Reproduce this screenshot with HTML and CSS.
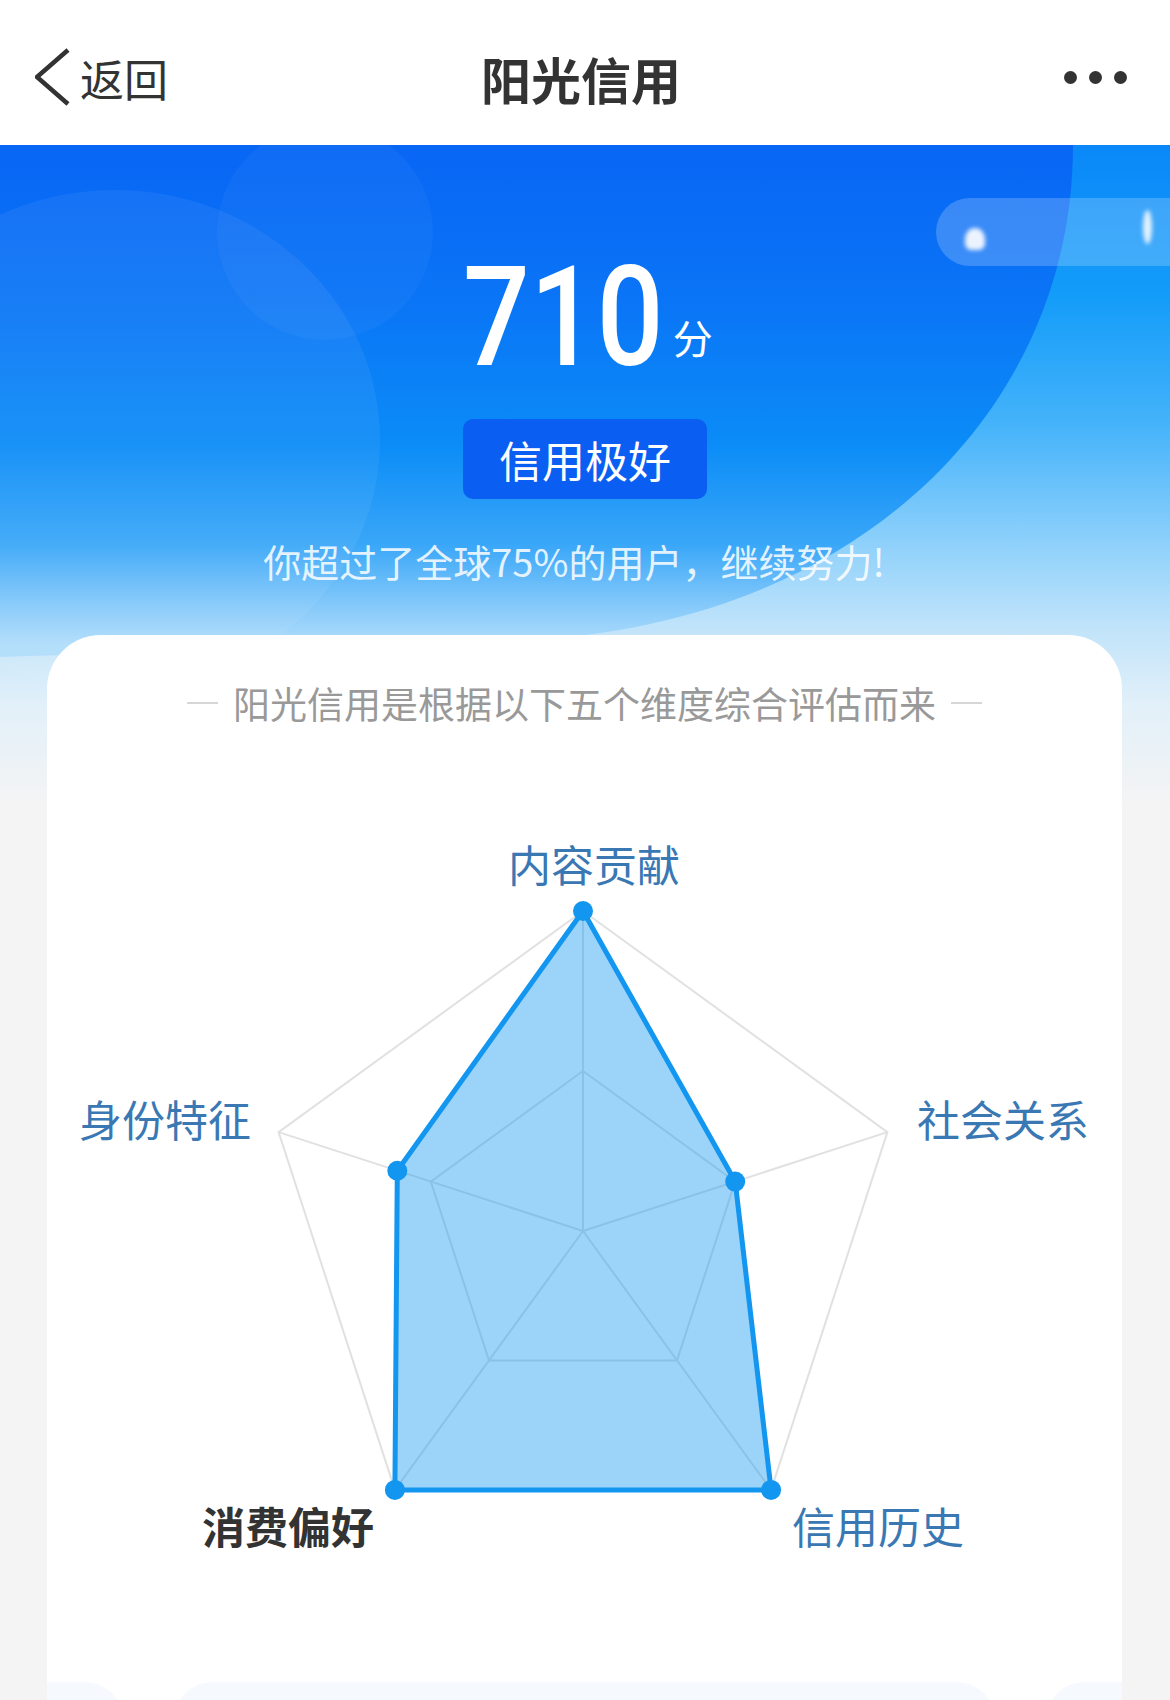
FILE: index.html
```html
<!DOCTYPE html>
<html lang="zh-CN">
<head>
<meta charset="utf-8">
<title>阳光信用</title>
<link rel="stylesheet" href="styles.css">
</head>
<body>
<header class="nav">
  <div class="nav-left">
    <svg class="back-icon" width="36" height="60" viewBox="0 0 36 60"><path d="M33 2 L2 29 L33 56" fill="none" stroke="#333" stroke-width="4.5" stroke-linejoin="miter"/></svg>
    <span class="back-text">返回</span>
  </div>
  <h1 class="nav-title">阳光信用</h1>
  <div class="nav-right"><span class="dot"></span><span class="dot"></span><span class="dot"></span></div>
</header>

<main class="main">
  <svg class="hero-bg" width="1170" height="760" viewBox="0 0 1170 760">
    <defs>
      <linearGradient id="inner" x1="0" y1="0" x2="0" y2="500" gradientUnits="userSpaceOnUse">
        <stop offset="0" stop-color="#0866f5"/>
        <stop offset="0.3" stop-color="#0a74f6"/>
        <stop offset="0.6" stop-color="#0b8cf7"/>
        <stop offset="0.8" stop-color="#3aa7f8"/>
        <stop offset="0.92" stop-color="#84c9fa"/>
        <stop offset="1" stop-color="#b0ddfb"/>
      </linearGradient>
    </defs>
    <path d="M0 0 H1073 C1073 270 850 483 520 495 L0 512 Z" fill="url(#inner)"/>
    <ellipse cx="115" cy="295" rx="265" ry="250" fill="#ffffff" fill-opacity="0.06"/>
    <circle cx="325" cy="87" r="108" fill="#ffffff" fill-opacity="0.035"/>
  </svg>
  <div class="pill"><span class="blob b1"></span><span class="blob b2"></span></div>

  <section class="hero">
    <div class="score"><span class="score-num">710</span><span class="score-unit">分</span></div>
    <div class="badge">信用极好</div>
    <p class="rank">你超过了全球75%的用户，继续努力!</p>
  </section>

  <section class="card">
    <div class="card-title"><span class="dash"></span><span>阳光信用是根据以下五个维度综合评估而来</span><span class="dash"></span></div>
    <div class="radar">
      <svg class="radar-svg" width="1075" height="900" viewBox="0 0 1075 900">
        <g fill="none" stroke="#e1e1e1" stroke-width="2">
          <polygon points="536,181 840.4,402.1 724.1,759.9 347.9,759.9 231.6,402.1"/>
          <polygon points="536,341 688.2,451.6 630,630.4 442,630.4 383.8,451.6"/>
          <line x1="536" y1="501" x2="536" y2="181"/>
          <line x1="536" y1="501" x2="840.4" y2="402.1"/>
          <line x1="536" y1="501" x2="724.1" y2="759.9"/>
          <line x1="536" y1="501" x2="347.9" y2="759.9"/>
          <line x1="536" y1="501" x2="231.6" y2="402.1"/>
        </g>
        <polygon points="536,181 688.2,451.6 724.1,759.9 347.9,759.9 350.3,440.7" fill="rgba(20,150,240,0.42)" stroke="#1296f0" stroke-width="5" stroke-linejoin="round"/>
        <g fill="#1296f0">
          <circle cx="536" cy="181" r="10"/>
          <circle cx="688.2" cy="451.6" r="10"/>
          <circle cx="724.1" cy="759.9" r="10"/>
          <circle cx="347.9" cy="759.9" r="10"/>
          <circle cx="350.3" cy="440.7" r="10"/>
        </g>
      </svg>
      <span class="axis ax-top">内容贡献</span>
      <span class="axis ax-right">社会关系</span>
      <span class="axis ax-left">身份特征</span>
      <span class="axis ax-bl axis-strong">消费偏好</span>
      <span class="axis ax-br">信用历史</span>
    </div>
    <div class="carousel">
      <div class="slide slide-edge-left"></div>
      <div class="slide slide-main"></div>
      <div class="slide slide-edge-right"></div>
    </div>
  </section>
</main>
</body>
</html>
```

FILE: styles.css
```css
html, body {
  margin: 0;
  padding: 0;
  background: #f4f4f4;
}

body {
  width: 1170px;
  font-family: "Noto Sans CJK SC", "Noto Sans", sans-serif;
  color: #333;
  overflow-x: hidden;
}

/* ---------- navigation bar ---------- */
.nav {
  height: 145px;
  box-sizing: border-box;
  padding: 10px 43px 0 35px;
  background: #fff;
  display: grid;
  grid-template-columns: 1fr auto 1fr;
  align-items: center;
}

.nav-left {
  display: flex;
  align-items: center;
  gap: 9px;
}

.back-icon {
  display: block;
}

.back-text {
  font-size: 44px;
  line-height: 50px;
  color: #333;
}

.nav-title {
  margin: 0;
  font-size: 50px;
  line-height: 56px;
  font-weight: 700;
  color: #333;
}

.nav-right {
  display: flex;
  justify-content: flex-end;
  align-items: center;
  gap: 12px;
}

.dot {
  width: 13px;
  height: 13px;
  border-radius: 50%;
  background: #333;
}

/* ---------- main / hero ---------- */
.main {
  position: relative;
  overflow: hidden;
  background: #f4f4f4 linear-gradient(180deg, #0a88f8 0px, #139cf9 150px, #45b3fa 280px, #8fd1fb 400px, #bfe3fa 480px, #e2f0f9 560px, #f4f4f4 660px) no-repeat top left / 100% 760px;
}

.hero-bg {
  position: absolute;
  left: 0;
  top: 0;
  z-index: 0;
}

.pill {
  position: absolute;
  left: 936px;
  top: 53px;
  width: 280px;
  height: 68px;
  border-radius: 34px;
  background: rgba(255, 255, 255, 0.2);
  z-index: 1;
}

.blob {
  position: absolute;
  background: #fff;
  filter: blur(2px);
}

.b1 {
  left: 29px;
  top: 30px;
  width: 20px;
  height: 22px;
  border-radius: 50% 50% 30% 30%;
  opacity: 0.9;
}

.b2 {
  left: 207px;
  top: 12px;
  width: 9px;
  height: 34px;
  border-radius: 50%;
  opacity: 0.85;
}

.hero {
  position: relative;
  z-index: 2;
  padding: 102px 0 49px;
  display: flex;
  flex-direction: column;
  align-items: center;
  color: #fff;
}

.score {
  display: flex;
  align-items: flex-end;
  justify-content: center;
  padding-left: 6px;
}

.score-num {
  display: inline-block;
  font-family: Roboto, "Liberation Sans", sans-serif;
  font-weight: 500;
  font-size: 140px;
  line-height: 140px;
  transform: scaleX(0.84);
  margin: 0 -19px;
}

.score-unit {
  font-size: 40px;
  line-height: 40px;
  margin: 0 0 30px 9px;
}

.badge {
  margin-top: 32px;
  width: 244px;
  height: 80px;
  border-radius: 10px;
  background: #0a5ef2;
  display: flex;
  align-items: center;
  justify-content: center;
  font-size: 43px;
  letter-spacing: 0;
}

.rank {
  margin: 37px 0 0;
  padding-right: 22px;
  font-size: 38px;
  line-height: 50px;
  color: rgba(255, 255, 255, 0.86);
}

/* ---------- card ---------- */
.card {
  position: relative;
  z-index: 2;
  margin: 0 48px 0 47px;
  padding-top: 43px;
  background: #fff;
  border-radius: 54px 54px 0 0;
}

.card-title {
  display: flex;
  align-items: center;
  justify-content: center;
  gap: 15px;
  font-size: 37px;
  line-height: 50px;
  color: #999;
}

.dash {
  width: 31px;
  height: 2px;
  background: #d6d6d6;
}

.radar {
  position: relative;
  margin-top: 2px;
  height: 900px;
}

.radar-svg {
  display: block;
}

.axis {
  position: absolute;
  font-size: 43px;
  line-height: 50px;
  color: #3a78b4;
  white-space: nowrap;
}

.axis-strong {
  color: #333;
  font-weight: 700;
}

.ax-top { left: 461px; top: 108px; }
.ax-right { left: 870px; top: 363px; }
.ax-left { left: 32px; top: 363px; }
.ax-bl { left: 155px; top: 770px; }
.ax-br { left: 745px; top: 770px; }

.carousel {
  margin-top: 52px;
  display: flex;
  gap: 49px;
}

.slide {
  height: 110px;
  background: #f6f9fd;
}

.slide-edge-left {
  flex: 0 0 77px;
  border-radius: 0 40px 0 0;
}

.slide-main {
  flex: 1 1 auto;
  border-radius: 40px 40px 0 0;
}

.slide-edge-right {
  flex: 0 0 77px;
  border-radius: 40px 0 0 0;
}
```
